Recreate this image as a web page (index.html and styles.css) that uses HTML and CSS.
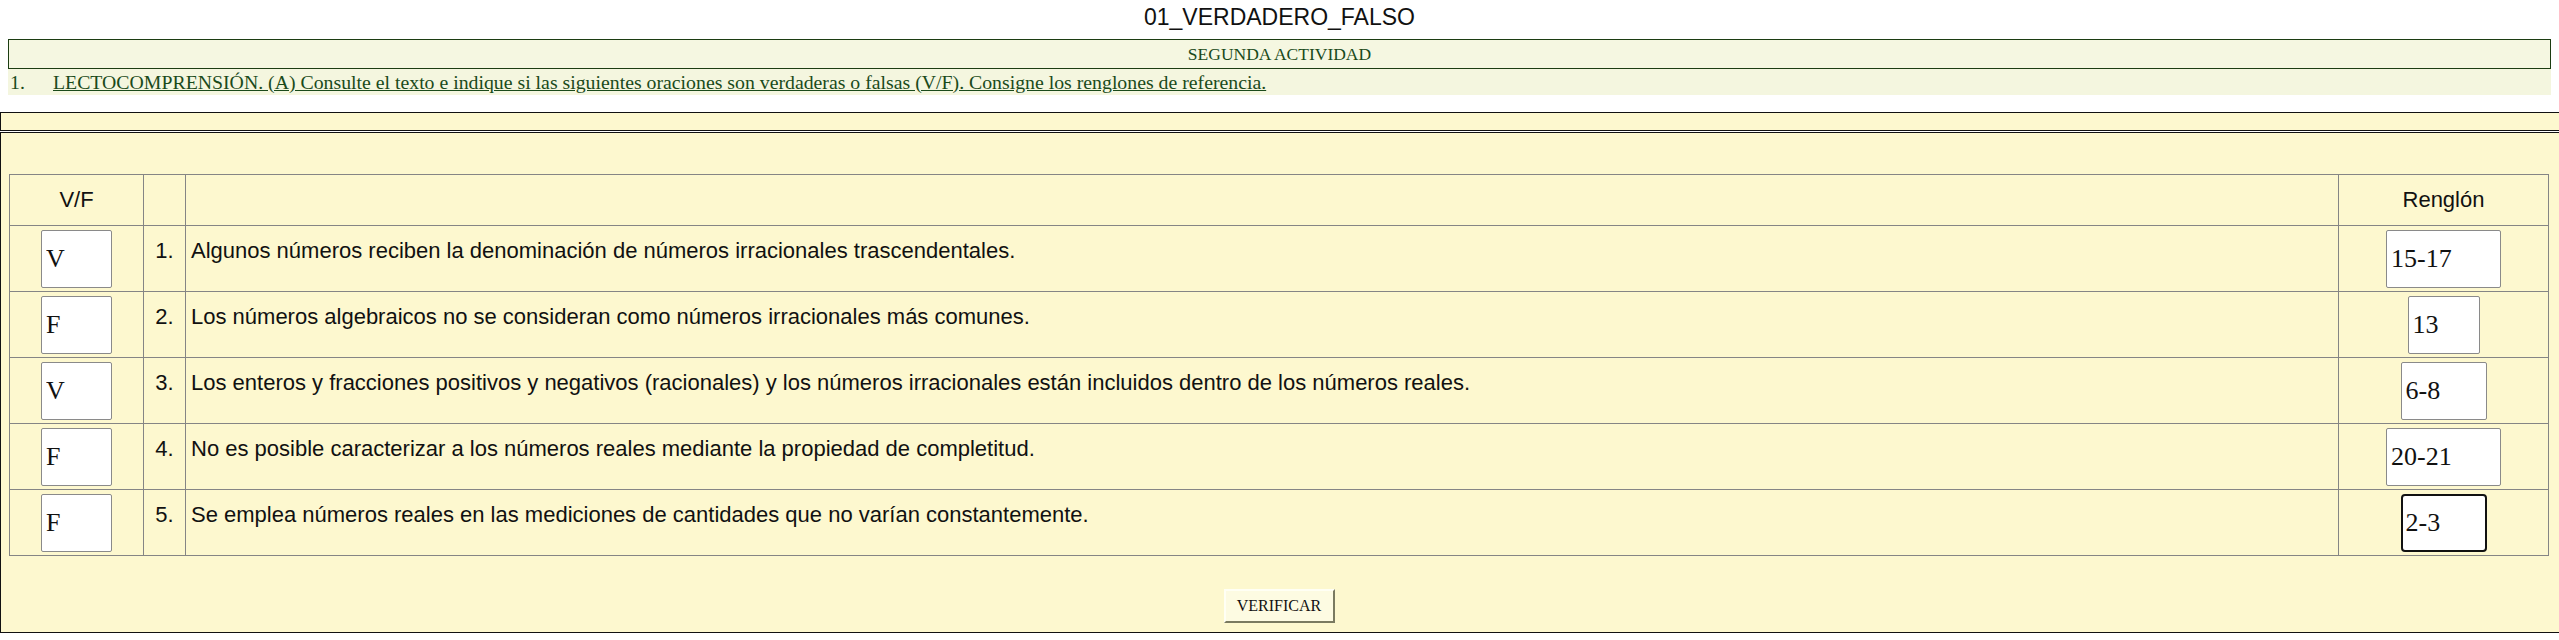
FILE: index.html
```html
<!DOCTYPE html>
<html lang="es">
<head>
<meta charset="utf-8">
<title>01_VERDADERO_FALSO</title>
<link rel="stylesheet" href="styles.css">
</head>
<body>
<h1 class="title">01_VERDADERO_FALSO</h1>
<div class="head">
  <div class="activity">SEGUNDA ACTIVIDAD</div>
  <div class="instruction"><span class="num">1.</span><span class="instr-text">LECTOCOMPRENSIÓN. (A) Consulte el texto e indique si las siguientes oraciones son verdaderas o falsas (V/F). Consigne los renglones de referencia.</span></div>
</div>
<div class="bar"></div>
<div class="panel">
  <table class="quiz">
    <colgroup>
      <col class="col-vf"><col class="col-num"><col class="col-text"><col class="col-ref">
    </colgroup>
    <tr class="head-row">
      <th>V/F</th><th></th><th></th><th>Renglón</th>
    </tr>
    <tr class="item-row">
      <td class="c-vf"><input class="ans w2" value="V"></td>
      <td class="c-num">1.</td>
      <td class="c-text">Algunos números reciben la denominación de números irracionales trascendentales.</td>
      <td class="c-ref"><input class="ans w5" value="15-17"></td>
    </tr>
    <tr class="item-row">
      <td class="c-vf"><input class="ans w2" value="F"></td>
      <td class="c-num">2.</td>
      <td class="c-text">Los números algebraicos no se consideran como números irracionales más comunes.</td>
      <td class="c-ref"><input class="ans w2b" value="13"></td>
    </tr>
    <tr class="item-row">
      <td class="c-vf"><input class="ans w2" value="V"></td>
      <td class="c-num">3.</td>
      <td class="c-text">Los enteros y fracciones positivos y negativos (racionales) y los números irracionales están incluidos dentro de los números reales.</td>
      <td class="c-ref"><input class="ans w3" value="6-8"></td>
    </tr>
    <tr class="item-row">
      <td class="c-vf"><input class="ans w2" value="F"></td>
      <td class="c-num">4.</td>
      <td class="c-text">No es posible caracterizar a los números reales mediante la propiedad de completitud.</td>
      <td class="c-ref"><input class="ans w5" value="20-21"></td>
    </tr>
    <tr class="item-row">
      <td class="c-vf"><input class="ans w2" value="F"></td>
      <td class="c-num">5.</td>
      <td class="c-text">Se emplea números reales en las mediciones de cantidades que no varían constantemente.</td>
      <td class="c-ref"><input id="last" class="ans w3 active" value="2-3"></td>
    </tr>
  </table>
  <div class="actions"><button class="verify" type="button">VERIFICAR</button></div>
</div>
<script src="script.js"></script>
</body>
</html>
```
FILE: styles.css
```css
html, body {
  margin: 0;
  padding: 0;
  background: #ffffff;
  overflow-x: hidden;
}

.title {
  margin: 0;
  height: 39px;
  line-height: 35px;
  text-align: center;
  font-family: "Liberation Sans", Arial, sans-serif;
  font-weight: 400;
  font-size: 23px;
  color: #111111;
}

.head {
  margin: 0 8px;
}

.activity {
  height: 28px;
  line-height: 28px;
  border: 1px solid #1c3d12;
  background: #f5f7e1;
  text-align: center;
  font-family: "Liberation Serif", "Times New Roman", serif;
  font-size: 17.5px;
  color: #1a4a1a;
}

.instruction {
  display: flex;
  align-items: center;
  height: 26px;
  padding-left: 2px;
  background: #f4f6df;
  font-family: "Liberation Serif", "Times New Roman", serif;
  font-size: 19.8px;
  color: #1a4a1a;
}

.num {
  width: 43px;
  flex: none;
}

.instr-text {
  text-decoration: underline;
  white-space: nowrap;
}

.bar {
  box-sizing: border-box;
  width: calc(100% + 1px);
  height: 19px;
  margin-top: 17px;
  margin-bottom: 1px;
  border: 1px solid #111111;
  background: #fdf8cf;
}

.panel {
  box-sizing: border-box;
  width: calc(100% + 1px);
  border: 1px solid #111111;
  background: #fdf8cf;
  padding: 41px 10px 9px 8px;
}

.quiz {
  width: 100%;
  border-collapse: collapse;
  border: 1px solid #3a3a3a;
  font-family: "Liberation Sans", Arial, sans-serif;
  font-size: 22px;
  color: #111111;
}

.col-vf { width: 134px; }
.col-num { width: 42px; }
.col-ref { width: 210px; }

.quiz th,
.quiz td {
  border: 1px solid #858585;
  padding: 0;
}

.head-row {
  height: 51px;
}

.item-row {
  height: 66px;
}

.quiz th {
  font-weight: 400;
  text-align: center;
  vertical-align: middle;
}

.c-vf,
.c-ref {
  text-align: center;
  vertical-align: middle;
}

.quiz .c-num {
  text-align: center;
  vertical-align: top;
  padding-top: 12px;
}

.quiz .c-text {
  text-align: left;
  vertical-align: top;
  padding: 12px 6px 0 5px;
}

.ans {
  box-sizing: border-box;
  height: 58px;
  margin: 0;
  padding: 0 4px;
  border: 1px solid #8a8a8a;
  border-radius: 2px;
  background: #ffffff;
  font-family: "Liberation Serif", "Times New Roman", serif;
  font-size: 26px;
  color: #111111;
  vertical-align: middle;
}

.w2 { width: 71px; }
.w2b { width: 72px; }
.w3 { width: 86px; }
.w5 { width: 115px; }

.ans.active,
.ans:focus {
  outline: none;
  border: 2px solid #111111;
  border-radius: 4px;
  padding: 0 3px;
}

.actions {
  display: flex;
  justify-content: center;
  padding-top: 33px;
}

.verify {
  box-sizing: border-box;
  height: 34px;
  width: 111px;
  margin: 0;
  padding: 0;
  border-style: solid;
  border-width: 2px;
  border-color: #fffff4 #7a7a60 #7a7a60 #fffff4;
  background: #fdfbe2;
  font-family: "Liberation Serif", "Times New Roman", serif;
  font-size: 16px;
  color: #111111;
}
```
FILE: script.js
```js
var el = document.getElementById('last');
if (el) {
  el.focus();
  var n = el.value.length;
  el.setSelectionRange(n, n);
}
```
